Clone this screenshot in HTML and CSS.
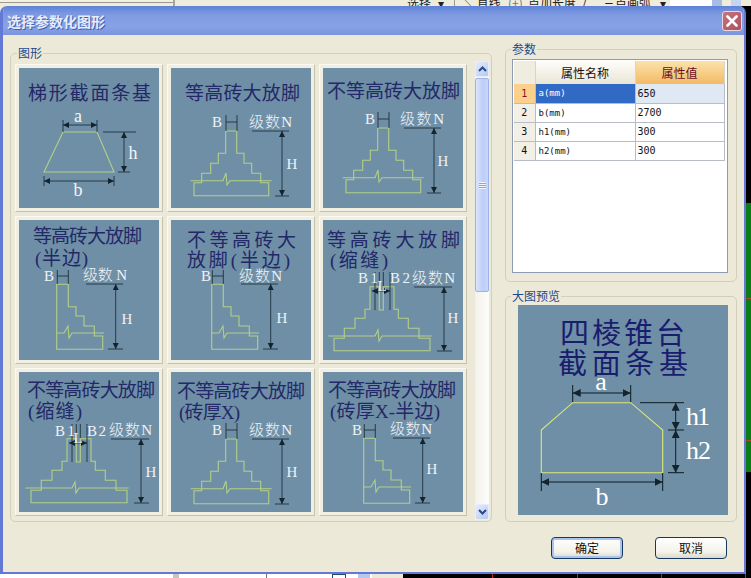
FILE: index.html
```html
<!DOCTYPE html>
<html lang="zh-CN">
<head>
<meta charset="utf-8">
<title>选择参数化图形</title>
<link rel="stylesheet" href="styles.css">
</head>
<body>
<svg class="defs" width="0" height="0" aria-hidden="true">
  <defs>
    <marker id="arrow" markerUnits="userSpaceOnUse" markerWidth="7" markerHeight="7" refX="6" refY="3" orient="auto-start-reverse"><path class="head" d="M0 0L6 3L0 6Z"/></marker>
    <marker id="arrow-big" markerUnits="userSpaceOnUse" markerWidth="9" markerHeight="9" refX="8" refY="4" orient="auto-start-reverse"><path class="head" d="M0 0L8 4L0 8Z"/></marker>
    <g id="fig-full">
      <path class="shape" d="M54.7 63V85.3H47.3V95.3H39.7V105.3H30.7V114.7H23V127.7H97.7V114.7H89.7V105.3H80.7V95.3H73V85.3H65.7V63Z"/>
      <path class="shape" d="M19.7 112.7H52L55 105L56 117L59 112.7H100.7"/>
      <path class="dim" d="M55 47V63M66 47V63M55 54H66M81 63H118M104 128H118"/>
      <path class="dim" d="M111 63V128" marker-start="url(#arrow)" marker-end="url(#arrow)"/>
    </g>
    <g id="fig-half">
      <path class="shape" d="M37.7 64.3H49.3V86.7H57V96H65V106H75.3V116H83.7V129.3H37.7Z"/>
      <path class="shape" d="M37.7 113H45L49 106L50 118L53 113H85"/>
      <path class="dim" d="M38.3 50V64M49.3 50V64M38.3 56H49.3M67 64H104M89 129H104"/>
      <path class="dim" d="M96.7 64V129" marker-start="url(#arrow)" marker-end="url(#arrow)"/>
    </g>
    <g id="fig-gap">
      <path class="shape" d="M47 66.7V89.3H42V98.3H32V108.3H21.3V118.3H11V130.7H107V118.3H96V108.3H85.3V98.3H75.3V89.3H71V66.7H60.3V90H56.3V66.7Z"/>
      <path class="shape" d="M5.3 116H52L55 110L56 121L59 116H108.7"/>
      <path class="dim" d="M52 52V90M56.3 52V66M60.3 52V66M67 52V90M91 67H129M114 131H129"/>
      <path class="dim" d="M49 71H67" marker-start="url(#arrow)" marker-end="url(#arrow)"/>
      <path class="dim" d="M121 67V131" marker-start="url(#arrow)" marker-end="url(#arrow)"/>
    </g>
  </defs>
</svg>

<div class="screen">
  <div class="top-strip">
    <span class="ts-plain"></span>
    <span class="ts-sep"></span>
    <span class="ts-blank"></span>
    <span class="ts-tool ts-tool-select">选择</span>
    <span class="ts-tool ts-caret">▾</span>
    <span class="ts-tool ts-line">╲ 直线</span>
    <span class="ts-tool ts-plus">(+)</span>
    <span class="ts-tool ts-len">点加长度</span>
    <span class="ts-tool ts-slash">/</span>
    <span class="ts-tool ts-arc">三点画弧</span>
    <span class="ts-tool ts-caret2">▾</span>
    <span class="ts-white"></span>
    <span class="ts-drop"></span>
    <span class="ts-blue"></span>
  </div>

  <div class="stage">
    <div class="dialog">
      <header class="titlebar">
        <span class="title">选择参数化图形</span>
        <button class="close" type="button" aria-label="关闭">
          <svg width="12" height="12" viewBox="0 0 12 12"><path class="close-x" d="M1.5 1.5L10.5 10.5M10.5 1.5L1.5 10.5"/></svg>
        </button>
      </header>

      <div class="body">
        <fieldset class="group group-shapes">
          <legend>图形</legend>
          <div class="shapes-row">
            <div class="thumbs">
              <div class="card"><svg class="pic" viewBox="0 0 140 140">
                <text class="t-title" x="9" y="32" textLength="123">梯形截面条基</text>
                <path class="shape" d="M44 64H78L95 104H25Z"/>
                <path class="dim" d="M44 52V64M78 52V64M84 64H117M99 104H111M25 108V118M95 108V118"/>
                <path class="dim" d="M44 57H78" marker-start="url(#arrow)" marker-end="url(#arrow)"/>
                <path class="dim" d="M105 64V104" marker-start="url(#arrow)" marker-end="url(#arrow)"/>
                <path class="dim" d="M25 113H95" marker-start="url(#arrow)" marker-end="url(#arrow)"/>
                <text class="t-dim-lg" x="59" y="54" text-anchor="middle">a</text>
                <text class="t-dim-lg" x="114" y="91" text-anchor="middle">h</text>
                <text class="t-dim-lg" x="59" y="128" text-anchor="middle">b</text>
              </svg></div>

              <div class="card"><svg class="pic" viewBox="0 0 140 140">
                <text class="t-title" x="14" y="32" textLength="115">等高砖大放脚</text>
                <use href="#fig-full"/>
                <text class="t-dim" x="46" y="59" text-anchor="middle">B</text>
                <text class="t-dim" x="78" y="59" textLength="43">级数N</text>
                <text class="t-dim" x="121" y="101" text-anchor="middle">H</text>
              </svg></div>

              <div class="card"><svg class="pic" viewBox="0 0 140 140">
                <text class="t-title" x="4" y="30" textLength="133">不等高砖大放脚</text>
                <use href="#fig-full" transform="translate(0 -3)"/>
                <text class="t-dim" x="47" y="56" text-anchor="middle">B</text>
                <text class="t-dim" x="77" y="56" textLength="44">级数N</text>
                <text class="t-dim" x="120" y="98" text-anchor="middle">H</text>
              </svg></div>

              <div class="card"><svg class="pic" viewBox="0 0 140 140">
                <text class="t-title" x="14" y="23" textLength="109">等高砖大放脚</text>
                <text class="t-title" x="16" y="45" textLength="53">(半边)</text>
                <use href="#fig-half"/>
                <text class="t-dim" x="30" y="61" text-anchor="middle">B</text>
                <text class="t-dim" x="64" y="60" textLength="44">级数 N</text>
                <text class="t-dim" x="108" y="104" text-anchor="middle">H</text>
              </svg></div>

              <div class="card"><svg class="pic" viewBox="0 0 140 140">
                <text class="t-title" x="16" y="27" textLength="109">不等高砖大</text>
                <text class="t-title" x="16" y="47" textLength="103">放脚(半边)</text>
                <use href="#fig-half" transform="translate(3 0)"/>
                <text class="t-dim" x="35" y="61" text-anchor="middle">B</text>
                <text class="t-dim" x="68" y="61" textLength="43">级数N</text>
                <text class="t-dim" x="111" y="103" text-anchor="middle">H</text>
              </svg></div>

              <div class="card"><svg class="pic" viewBox="0 0 140 140">
                <text class="t-title" x="4" y="27" textLength="133">等高砖大放脚</text>
                <text class="t-title" x="7" y="47" textLength="58">(缩缝)</text>
                <use href="#fig-gap"/>
                <text class="t-dim" x="35" y="63" textLength="20">B1</text>
                <text class="t-dim" x="67" y="63" textLength="20">B2</text>
                <text class="t-dim" x="89" y="63" textLength="43">级数N</text>
                <text class="t-dim" x="59" y="71" text-anchor="middle">L</text>
                <text class="t-dim" x="130" y="103" text-anchor="middle">H</text>
              </svg></div>

              <div class="card"><svg class="pic" viewBox="0 0 140 140">
                <text class="t-title" x="8" y="25" textLength="128">不等高砖大放脚</text>
                <text class="t-title" x="9" y="46" textLength="54">(缩缝)</text>
                <use href="#fig-gap" transform="translate(1 0)"/>
                <text class="t-dim" x="36" y="64" textLength="20">B1</text>
                <text class="t-dim" x="68" y="64" textLength="19">B2</text>
                <text class="t-dim" x="90" y="63" textLength="43">级数N</text>
                <text class="t-dim" x="59" y="71" text-anchor="middle">L</text>
                <text class="t-dim" x="132" y="105" text-anchor="middle">H</text>
              </svg></div>

              <div class="card"><svg class="pic" viewBox="0 0 140 140">
                <text class="t-title" x="6" y="26" textLength="128">不等高砖大放脚</text>
                <text class="t-title" x="8" y="47" textLength="61">(砖厚X)</text>
                <use href="#fig-full" transform="translate(0 4)"/>
                <text class="t-dim" x="46" y="63" text-anchor="middle">B</text>
                <text class="t-dim" x="78" y="63" textLength="43">级数N</text>
                <text class="t-dim" x="121" y="105" text-anchor="middle">H</text>
              </svg></div>

              <div class="card"><svg class="pic" viewBox="0 0 140 140">
                <text class="t-title" x="5" y="25" textLength="128">不等高砖大放脚</text>
                <text class="t-title" x="7" y="46" textLength="110">(砖厚X-半边)</text>
                <use href="#fig-half" transform="translate(3 2)"/>
                <text class="t-dim" x="34" y="63" text-anchor="middle">B</text>
                <text class="t-dim" x="67" y="62" textLength="42">级数N</text>
                <text class="t-dim" x="109" y="102" text-anchor="middle">H</text>
              </svg></div>
            </div>

            <div class="scrollbar">
              <div class="sb-btn"><svg width="9" height="6" viewBox="0 0 9 6"><path class="chev" d="M1 5L4.5 1.5L8 5"/></svg></div>
              <div class="sb-thumb"><span class="sb-grip"></span></div>
              <div class="sb-track"></div>
              <div class="sb-btn"><svg width="9" height="6" viewBox="0 0 9 6"><path class="chev" d="M1 1L4.5 4.5L8 1"/></svg></div>
            </div>
          </div>
        </fieldset>

        <div class="side">
          <fieldset class="group group-params">
            <legend>参数</legend>
            <div class="grid-frame">
              <table class="props">
                <colgroup><col class="c-idx"><col class="c-name"><col class="c-val"></colgroup>
                <thead>
                  <tr><th class="corner"></th><th class="h-name">属性名称</th><th class="h-val">属性值</th></tr>
                </thead>
                <tbody>
                  <tr class="current"><td class="idx">1</td><td class="name">a(mm)</td><td class="val">650</td></tr>
                  <tr><td class="idx">2</td><td class="name">b(mm)</td><td class="val">2700</td></tr>
                  <tr><td class="idx">3</td><td class="name">h1(mm)</td><td class="val">300</td></tr>
                  <tr><td class="idx">4</td><td class="name">h2(mm)</td><td class="val">300</td></tr>
                </tbody>
              </table>
            </div>
          </fieldset>

          <fieldset class="group group-preview">
            <legend>大图预览</legend>
            <svg class="preview" viewBox="0 0 210 210">
              <text class="t-big" x="42" y="39" textLength="125">四棱锥台</text>
              <text class="t-big" x="40" y="69" textLength="130">截面条基</text>
              <path class="shape-big" d="M54.7 97.7H112.7L144.7 125V167.7H23.3V125Z"/>
              <path class="dim-big" d="M54.7 80V97M112.7 80V97M122 97.7H166M150 125H166M150 167.7H166M23.3 168V186M144.7 168V186"/>
              <path class="dim-big" d="M54.7 88H112.7" marker-start="url(#arrow-big)" marker-end="url(#arrow-big)"/>
              <path class="dim-big" d="M157.7 97.7V125" marker-start="url(#arrow-big)" marker-end="url(#arrow-big)"/>
              <path class="dim-big" d="M157.7 125V167.7" marker-start="url(#arrow-big)" marker-end="url(#arrow-big)"/>
              <path class="dim-big" d="M23.3 177H144.7" marker-start="url(#arrow-big)" marker-end="url(#arrow-big)"/>
              <text class="t-dim-big" x="83" y="85" text-anchor="middle">a</text>
              <text class="t-dim-big" x="168" y="120" textLength="24">h1</text>
              <text class="t-dim-big" x="168" y="154" textLength="25">h2</text>
              <text class="t-dim-big" x="84" y="200" text-anchor="middle">b</text>
            </svg>
          </fieldset>
        </div>

        <footer class="actions">
          <button class="btn btn-default" type="button">确定</button>
          <button class="btn" type="button">取消</button>
        </footer>
      </div>
    </div>
    <div class="right-strip"></div>
  </div>

  <div class="bottom-strip">
    <span class="bs-a"></span>
    <span class="bs-box"></span>
    <span class="bs-b"></span>
    <span class="bs-c"></span>
    <span class="bs-d"></span>
    <span class="bs-e"></span>
    <span class="bs-f"></span>
    <span class="bs-canvas"></span>
  </div>
</div>
</body>
</html>
```

FILE: styles.css
```css
* { box-sizing: border-box; }
html, body { margin: 0; padding: 0; background: #000; }
body {
  width: 751px;
  height: 578px;
  overflow: hidden;
  font-family: "Noto Sans CJK SC", "Liberation Sans", sans-serif;
  font-size: 12px;
}
.defs { position: absolute; }
.screen { display: flex; flex-direction: column; width: 751px; height: 578px; }

/* Clipped application toolbar behind the dialog */
.top-strip {
  display: flex;
  height: 6px;
  overflow: hidden;
  background: #efecdc;
  color: #222;
  line-height: 6px;
  white-space: nowrap;
}
.ts-plain { width: 173px; background: linear-gradient(#f3f0e2 0 2px, #9c9a8c 2px 3px, #efecdc 3px); }
.ts-sep { width: 2px; background: #a8a698; }
.ts-blank { width: 232px; }
.ts-tool { display: block; flex: none; }
.ts-tool-select { width: 31px; }
.ts-caret { width: 16px; }
.ts-line { width: 54px; border-left: 1px solid #999; padding-left: 7px; }
.ts-plus { width: 20px; color: #777; }
.ts-len { width: 54px; }
.ts-slash { width: 21px; }
.ts-arc { width: 57px; }
.ts-caret2 { width: 10px; }
.ts-white { width: 42px; background: #fff; }
.ts-drop { width: 10px; background: #a8bce8; }
.ts-blue { width: 10px; margin-left: 9px; background: #c6d4f2; }

.stage {
  display: flex;
  height: 568px;
  background: linear-gradient(to right, #efecdc 50%, #000 50%);
}

/* Dialog */
.dialog {
  display: flex;
  flex-direction: column;
  width: 746px;
  height: 568px;
  border-style: solid;
  border-color: #6478d6;
  border-width: 0 2px 2px 3px;
  border-radius: 7px 7px 0 0;
  background: #ece9d8;
  overflow: hidden;
}
.titlebar {
  display: flex;
  align-items: center;
  justify-content: space-between;
  flex: none;
  height: 29px;
  margin-left: -3px;
  padding: 0 2px 0 7px;
  background: linear-gradient(#5f82d8 0, #7e9be2 30%, #87a2e6 70%, #7a95de 100%);
}
.title {
  margin-top: 1px;
  color: #e6ecfa;
  font-size: 14px;
  font-weight: 700;
  line-height: 16px;
  text-shadow: 1px 1px 0 #4060b0;
}
.close {
  display: flex;
  align-items: center;
  justify-content: center;
  width: 20px;
  height: 20px;
  margin-top: 1px;
  padding: 0;
  border: 1px solid #e8d8e0;
  border-radius: 3px;
  background: linear-gradient(135deg, #c4747c, #b0505e);
}
.close-x { fill: none; stroke: #fff; stroke-width: 2.6; stroke-linecap: round; }

.body {
  display: grid;
  grid-template-columns: 482px 232px;
  grid-template-rows: 487px auto;
  column-gap: 13px;
  padding-left: 7px;
}

/* Group boxes */
.group {
  margin: 0;
  padding: 0;
  min-width: 0;
  border: 1px solid #d2cfbc;
  border-radius: 5px;
}
.group legend {
  padding: 0 1px;
  color: #1c4a8c;
  font-size: 12px;
  line-height: 12px;
}
.group-shapes legend { margin-left: 2px; }
.group-params legend { margin-left: -1px; }
.group-preview legend { margin-left: -7px; }
.group-shapes { height: 475px; margin-top: 12px; padding: 5px 2px 5px 4px; }
.shapes-row { display: flex; gap: 8px; }

.thumbs {
  display: grid;
  grid-template-columns: repeat(3, 148px);
  grid-auto-rows: 148px;
  gap: 4px;
}
.card {
  padding: 3px;
  border: 1px solid;
  border-color: #fbfaf2 #c4c2ae #c4c2ae #fbfaf2;
  background: #f1efe2;
}
.pic { display: block; width: 140px; height: 140px; background: #6f8fa6; }

/* Drawing primitives */
.shape { fill: none; stroke: #b4cf86; stroke-width: 1.1; }
.dim { fill: none; stroke: #14242e; stroke-width: 0.8; }
.head { fill: #14242e; }
.t-title {
  fill: #232868;
  font-family: "Liberation Serif", "Noto Sans CJK SC", serif;
  font-size: 19px;
  font-weight: 400;
}
.t-dim {
  fill: #eef3f6;
  font-family: "Liberation Serif", "Noto Sans CJK SC", serif;
  font-size: 15px;
  font-weight: 300;
}
.t-dim-lg {
  fill: #f2f6f8;
  font-family: "Liberation Serif", serif;
  font-size: 18px;
}
.shape-big { fill: none; stroke: #dbe878; stroke-width: 1.1; }
.dim-big { fill: none; stroke: #0c1a20; stroke-width: 1; }
.t-big {
  fill: #1a1d6e;
  font-family: "Liberation Serif", "Noto Sans CJK SC", serif;
  font-size: 29px;
  font-weight: 400;
}
.t-dim-big {
  fill: #fff;
  font-family: "Liberation Serif", "Noto Sans CJK SC", serif;
  font-size: 26px;
}

/* Scrollbar */
.scrollbar {
  display: flex;
  flex-direction: column;
  flex: none;
  width: 14px;
  height: 459px;
  margin-top: -3px;
  background: #f6f5ee;
}
.sb-btn {
  display: flex;
  align-items: center;
  justify-content: center;
  flex: none;
  height: 16px;
  border: 1px solid #e6ecfb;
  border-radius: 2px;
  background: linear-gradient(135deg, #e4ebfd, #b6c9f5);
}
.chev { fill: none; stroke: #2c4a84; stroke-width: 2; }
.sb-thumb {
  display: flex;
  align-items: center;
  justify-content: center;
  flex: none;
  height: 214px;
  margin-top: 1px;
  border: 1px solid #9fb4e4;
  border-radius: 2px;
  background: linear-gradient(to right, #dbe4fc, #bccdf7 60%, #c8d6f9);
}
.sb-grip {
  width: 7px;
  height: 7px;
  background: repeating-linear-gradient(#eef3fe 0 1px, #8fa6dc 1px 2px);
}
.sb-track { flex: 1; background: linear-gradient(to right, #f3f2ea, #fdfdfb); }

/* Right column */
.side { display: flex; flex-direction: column; gap: 8px; margin-top: 8px; }
.group-params { height: 239px; padding: 4px 8px 0 6px; }
.grid-frame {
  height: 214px;
  padding: 1px 2px 0 1px;
  border: 1px solid #8d9cb4;
  background: #fff;
}
.props {
  width: 210px;
  border-collapse: collapse;
  table-layout: fixed;
  font-family: "DejaVu Sans Mono", "Liberation Mono", monospace;
}
.c-idx { width: 21px; }
.c-name { width: 100px; }
.c-val { width: 89px; }
.props th {
  height: 23px;
  padding: 0;
  border-right: 1px solid #d8d6c8;
  font-family: "Noto Sans CJK SC", sans-serif;
  font-size: 12px;
  font-weight: 400;
}
.corner { background: #efece0; }
.h-name { background: linear-gradient(#fdfdf9, #e9e5d6); color: #111; }
.h-val { background: linear-gradient(#fbe2ac, #f3b963); color: #6a0c24; }
.props td {
  height: 19px;
  padding: 0 0 0 2px;
  border: 1px solid #b8bcc4;
  border-width: 0 1px 1px 0;
  font-size: 10px;
  color: #111;
}
.props td.idx { padding: 0; background: #f2f0e6; text-align: center; }
.props td.name { padding-left: 3px; font-size: 9px; }
.current td.idx { background: #fbd08c; color: #8a1020; }
.current td.name { background: #316ac5; color: #fff; }
.current td.val { background: #dfe8f3; }

.group-preview { height: 232px; padding: 3px 8px 0 12px; }
.preview { display: block; width: 210px; height: 210px; background: #6f8fa6; }

/* Buttons */
.actions {
  grid-column: 2;
  display: flex;
  justify-content: flex-end;
  gap: 32px;
  margin-top: 15px;
  padding-right: 10px;
}
.btn {
  width: 72px;
  height: 22px;
  padding: 0;
  border: 1px solid #17375e;
  border-radius: 4px;
  background: linear-gradient(#ffffff, #f3f2ea 70%, #dcd9cc);
  color: #111;
  font-family: "Noto Sans CJK SC", sans-serif;
  font-size: 12px;
  line-height: 18px;
}
.btn-default { box-shadow: inset 0 0 0 2px #a9c4ee; }

/* Behind the dialog: right and bottom edges */
.right-strip {
  width: 5px;
  background: linear-gradient(#000 0 197px, #0a7d16 197px 292px, #b04030 292px 293px, #0a7d16 293px 434px, #b04030 434px 435px, #0a7d16 435px 466px, #000 466px);
}
.bottom-strip { display: flex; height: 4px; overflow: hidden; background: #000; }
.bottom-strip span { display: block; flex: none; height: 4px; }
.bs-a { width: 173px; background: #fff; }
.bs-box { width: 6px; background: #c8c6ba; }
.bs-b { width: 87px; background: #fff; }
.bs-c { width: 66px; background: #fff; border-left: 1px solid #777; }
.bs-d { width: 14px; background: #fff; border: 1px solid #1f4a70; border-bottom: 0; }
.bs-e { width: 12px; background: #fff; }
.bs-f { width: 45px; background: linear-gradient(to right, #b4c8f0 0 12px, #fff 12px 14px, #ece9d8 14px); }
.bs-canvas {
  width: 348px;
  background-image: linear-gradient(#c02020, #c02020);
  background-size: 1px 4px;
  background-repeat: no-repeat;
  background-position: 89px 0, 174px 0, 258px 0, 342px 0;
  background-image: linear-gradient(#c02020, #c02020), linear-gradient(#c02020, #c02020), linear-gradient(#c02020, #c02020), linear-gradient(#c02020, #c02020);
}
```
